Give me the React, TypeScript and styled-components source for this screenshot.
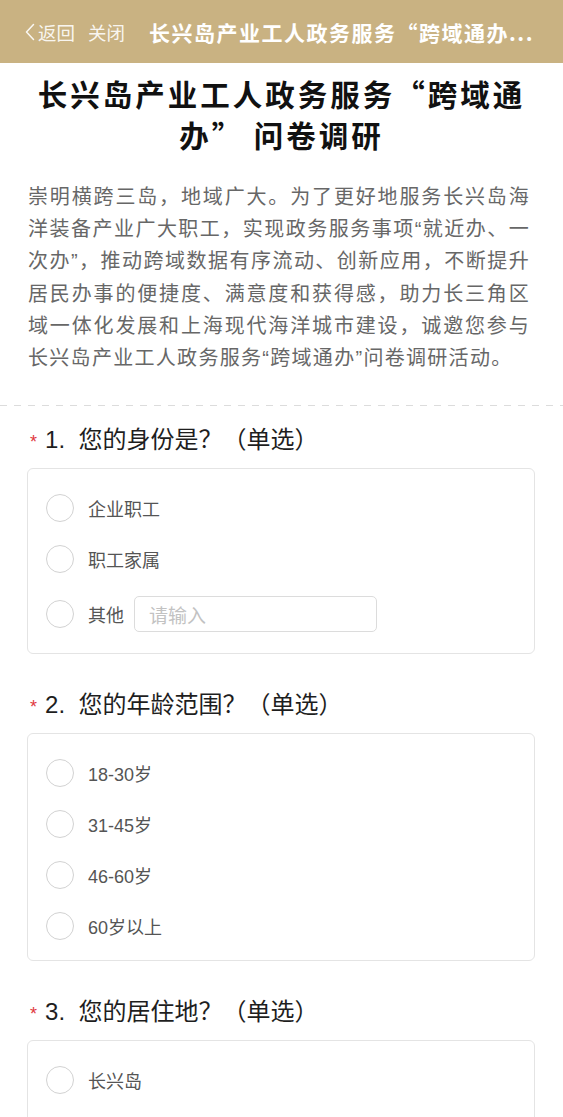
import React from "react";
import styled, { createGlobalStyle } from "styled-components";

const GlobalStyle = createGlobalStyle`
  html, body { margin: 0; padding: 0; background: #fff; }
  body {
    font-family: "Noto Sans CJK SC", "Noto Sans", sans-serif;
    -webkit-font-smoothing: antialiased;
  }
  * { box-sizing: border-box; }
`;

const Page = styled.div`
  width: 563px;
  min-height: 100vh;
  background: #fff;
  padding-bottom: 40px;
`;

const NavBar = styled.header`
  height: 63px;
  background: #c9b282;
  display: flex;
  align-items: center;
  padding-left: 25px;
  color: #fff;
`;

const NavLink = styled.span`
  display: inline-flex;
  align-items: center;
  font-size: 18.5px;
  color: rgba(255, 255, 255, 0.9);
  margin-right: 13px;
  white-space: nowrap;
`;

const NavTitle = styled.h1`
  margin: 0 0 0 11px;
  font-size: 21px;
  font-weight: 700;
  letter-spacing: 1.5px;
  white-space: nowrap;
  color: #fff;
`;

const Title = styled.h2`
  margin: 10px 0 0;
  padding: 0 26px;
  font-size: 29.5px;
  line-height: 41px;
  font-weight: 700;
  letter-spacing: 3px;
  text-align: center;
  color: #111;
`;

const Description = styled.p`
  margin: 26px 0 0;
  padding: 0 33px 0 28px;
  font-family: "Liberation Sans", "Noto Sans CJK SC", sans-serif;
  font-size: 20px;
  line-height: 32.2px;
  letter-spacing: 1.3px;
  color: #676767;
`;

const DescLine = styled.span<{ $last?: boolean }>`
  display: block;
  white-space: nowrap;
  text-align: ${(p) => (p.$last ? "left" : "justify")};
  text-align-last: ${(p) => (p.$last ? "left" : "justify")};
`;

const Divider = styled.div`
  margin-top: 31px;
  height: 1px;
  background: repeating-linear-gradient(
    to right,
    #dcdcdc 0 7px,
    transparent 7px 14px
  );
`;

const Question = styled.section<{ $first?: boolean }>`
  margin-top: ${(p) => (p.$first ? "18px" : "35px")};
`;

const QuestionTitle = styled.div`
  height: 32px;
  padding-left: 30px;
  font-family: "Liberation Sans", "Noto Sans CJK SC", sans-serif;
  font-size: 24px;
  line-height: 32px;
  color: #1e1e1e;
  white-space: nowrap;
`;

const Star = styled.span`
  font-family: "Liberation Sans", sans-serif;
  font-size: 18px;
  line-height: 0;
  color: #e0383e;
  margin-right: 8px;
`;

const Card = styled.div`
  margin: 12px 28px 0 27px;
  border: 1px solid #e4e4e4;
  border-radius: 6px;
  padding: 13px 18px 9px;
  background: #fff;
`;

const OptionRow = styled.label<{ $tall?: boolean }>`
  display: flex;
  align-items: center;
  height: ${(p) => (p.$tall ? "60px" : "51px")};
  cursor: pointer;
`;

const Radio = styled.span`
  width: 28px;
  height: 28px;
  flex-shrink: 0;
  border-radius: 50%;
  border: 1.5px solid #d2d2d2;
  margin-right: 14px;
  background: #fff;
`;

const OptionLabel = styled.span`
  font-family: "Liberation Sans", "Noto Sans CJK SC", sans-serif;
  font-size: 18px;
  color: #555;
  white-space: nowrap;
`;

const OtherInput = styled.input`
  margin-left: 10px;
  width: 243px;
  height: 36px;
  border: 1px solid #dcdcdc;
  border-radius: 5px;
  padding: 0 14px;
  font-family: "Noto Sans CJK SC", sans-serif;
  font-size: 19px;
  color: #333;
  outline: none;
  background: #fff;
  &::placeholder {
    color: #c2c2c2;
  }
`;

const Chevron = () => (
  <svg width="10" height="18" viewBox="0 0 10 18" style={{ marginRight: 3 }}>
    <polyline
      points="8.5,1.5 1.5,9 8.5,16.5"
      fill="none"
      stroke="rgba(255,255,255,0.9)"
      strokeWidth="1.5"
      strokeLinecap="round"
      strokeLinejoin="round"
    />
  </svg>
);

type Q = {
  no: number;
  text: string;
  options: string[];
  other?: boolean;
};

const questions: Q[] = [
  { no: 1, text: "您的身份是？（单选）", options: ["企业职工", "职工家属"], other: true },
  { no: 2, text: "您的年龄范围？（单选）", options: ["18-30岁", "31-45岁", "46-60岁", "60岁以上"] },
  { no: 3, text: "您的居住地？（单选）", options: ["长兴岛", "崇明本岛", "上海市区"], other: true },
];

const descLines = [
  "崇明横跨三岛，地域广大。为了更好地服务长兴岛海",
  "洋装备产业广大职工，实现政务服务事项“就近办、一",
  "次办”，推动跨域数据有序流动、创新应用，不断提升",
  "居民办事的便捷度、满意度和获得感，助力长三角区",
  "域一体化发展和上海现代海洋城市建设，诚邀您参与",
  "长兴岛产业工人政务服务“跨域通办”问卷调研活动。",
];

export default function App() {
  return (
    <Page>
      <GlobalStyle />
      <NavBar>
        <NavLink>
          <Chevron />
          返回
        </NavLink>
        <NavLink>关闭</NavLink>
        <NavTitle>长兴岛产业工人政务服务“跨域通办...</NavTitle>
      </NavBar>

      <Title>长兴岛产业工人政务服务“跨域通办” 问卷调研</Title>

      <Description>
        {descLines.map((l, i) => (
          <DescLine key={i} $last={i === descLines.length - 1}>
            {l}
          </DescLine>
        ))}
      </Description>

      <Divider />

      {questions.map((q, qi) => (
        <Question key={q.no} $first={qi === 0}>
          <QuestionTitle>
            <Star>*</Star>
            {q.no}.&nbsp;&nbsp;{q.text}
          </QuestionTitle>
          <Card>
            {q.options.map((o) => (
              <OptionRow key={o}>
                <Radio />
                <OptionLabel>{o}</OptionLabel>
              </OptionRow>
            ))}
            {q.other && (
              <OptionRow $tall>
                <Radio />
                <OptionLabel>其他</OptionLabel>
                <OtherInput placeholder="请输入" />
              </OptionRow>
            )}
          </Card>
        </Question>
      ))}
    </Page>
  );
}
